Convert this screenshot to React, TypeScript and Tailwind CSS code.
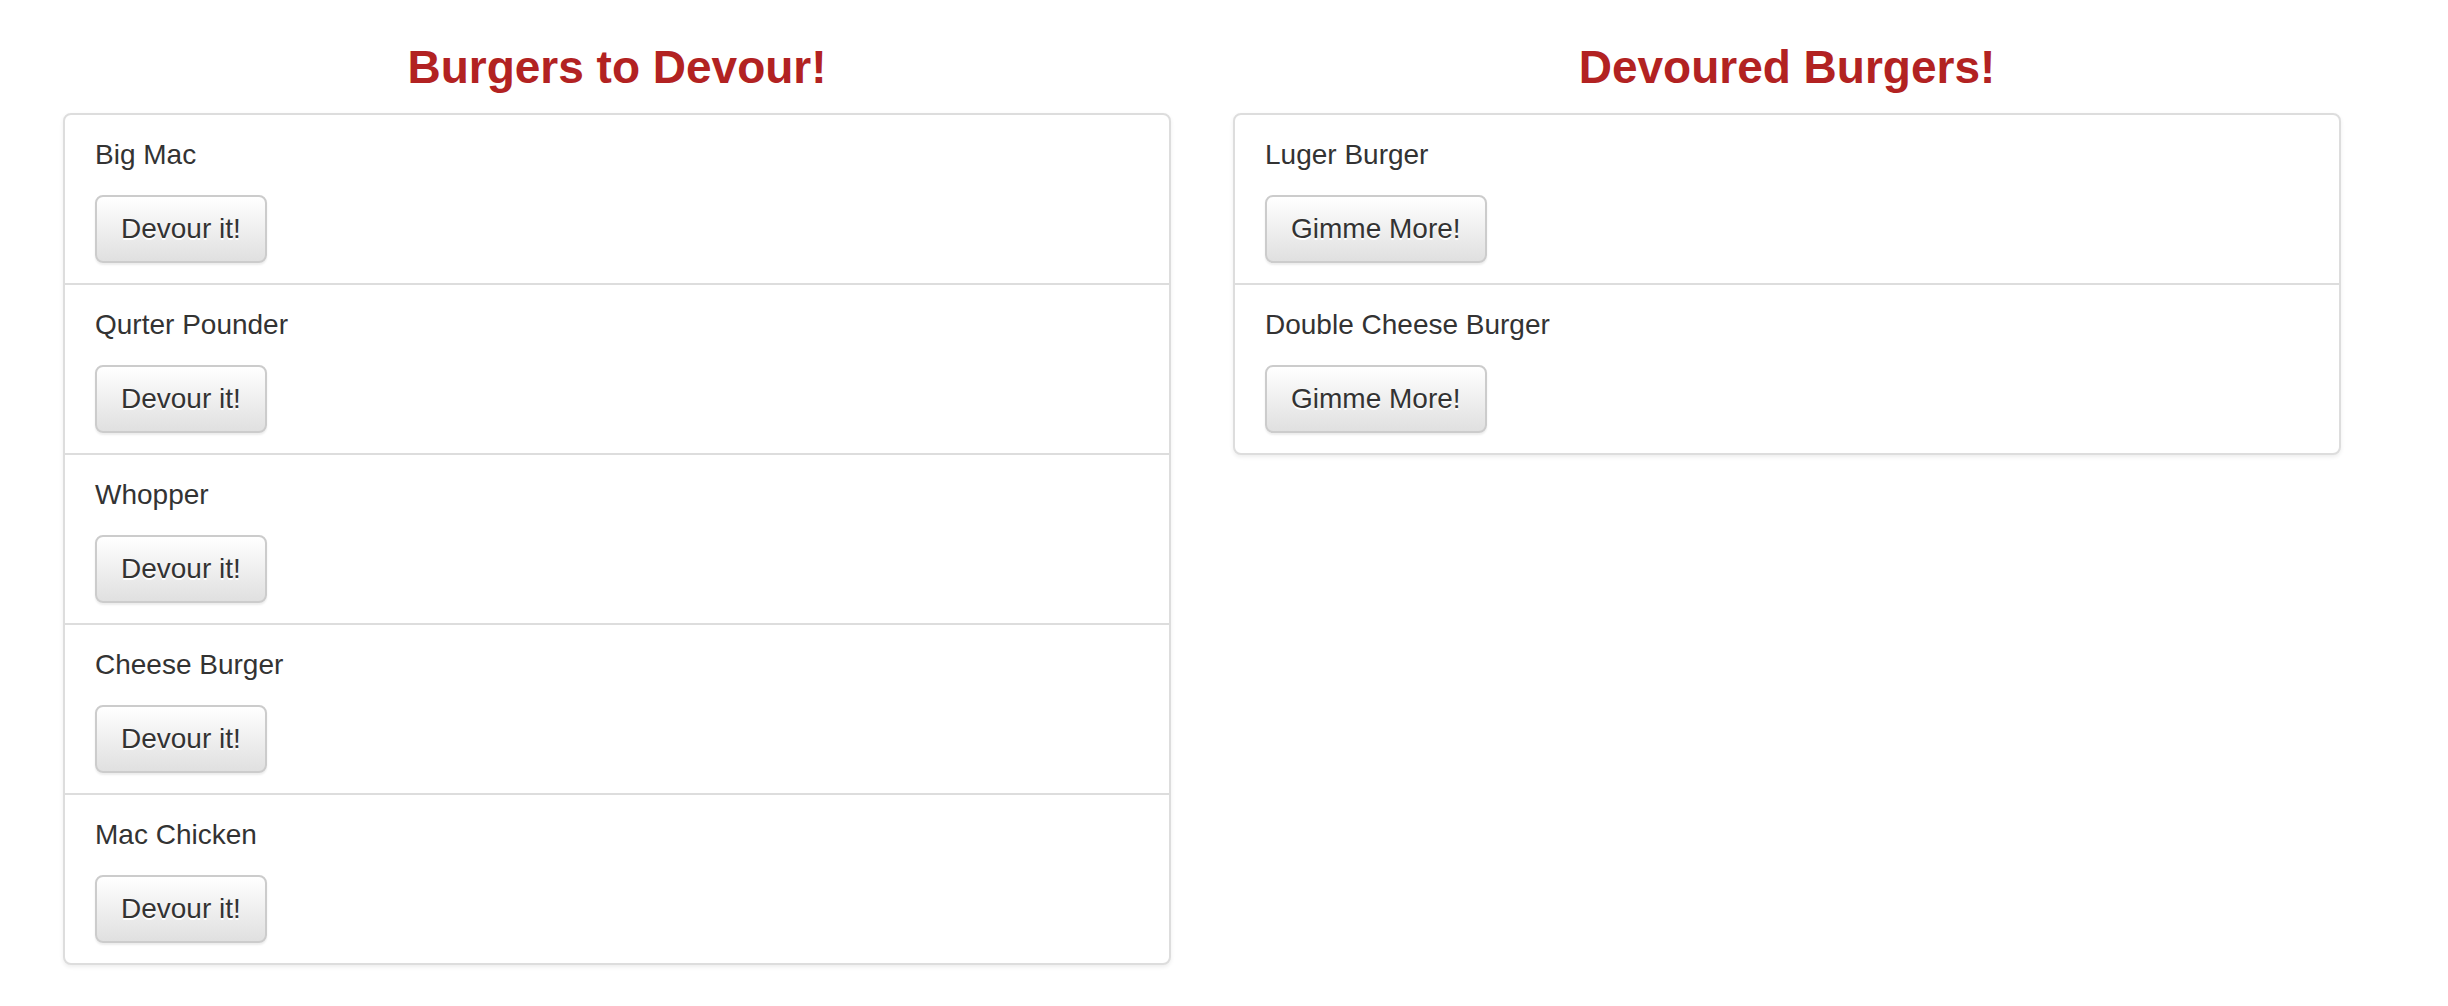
const toDevour = ["Big Mac", "Qurter Pounder", "Whopper", "Cheese Burger", "Mac Chicken"];
const devoured = ["Luger Burger", "Double Cheese Burger"];

const BurgerButton = ({ children }: { children: React.ReactNode }) => {
  return (
    <button
      type="button"
      className="h-[68px] px-[24px] rounded-[8px] border-2 border-[#ccc] bg-gradient-to-b from-white to-[#e0e0e0] text-[28px] leading-[40px] text-[#333] [text-shadow:0_2px_0_#fff] shadow-[inset_0_2px_0_rgba(255,255,255,0.15),0_2px_2px_rgba(0,0,0,0.075)]"
    >
      {children}
    </button>
  );
};

interface BurgerListProps {
  title: string;
  burgers: string[];
  action: string;
}

function BurgerList({ title, burgers, action }: BurgerListProps) {
  return (
    <div className="w-[1108px] shrink-0">
      <h3 className="mt-[42px] mb-[21px] h-[50px] text-center text-[46px] leading-[50px] font-bold text-[#b22222]">
        {title}
      </h3>
      {/* list group */}
      <ul className="rounded-[8px] border-2 border-[#ddd] bg-white divide-y-2 divide-[#ddd] shadow-[0_2px_4px_rgba(0,0,0,0.075)]">
        {burgers.map((name) => (
          <li key={name} className="px-[30px] py-[20px]">
            <p className="mb-[20px] text-[28px] leading-[40px] text-[#333]">{name}</p>
            <BurgerButton>{action}</BurgerButton>
          </li>
        ))}
      </ul>
    </div>
  );
}

export default function App() {
  return (
    <div className="min-h-[1006px] bg-white font-['Liberation_Sans',Arial,sans-serif]">
      <div className="flex items-start gap-[62px] pl-[63px]">
        <BurgerList title="Burgers to Devour!" burgers={toDevour} action="Devour it!" />
        <BurgerList title="Devoured Burgers!" burgers={devoured} action="Gimme More!" />
      </div>
    </div>
  );
}
